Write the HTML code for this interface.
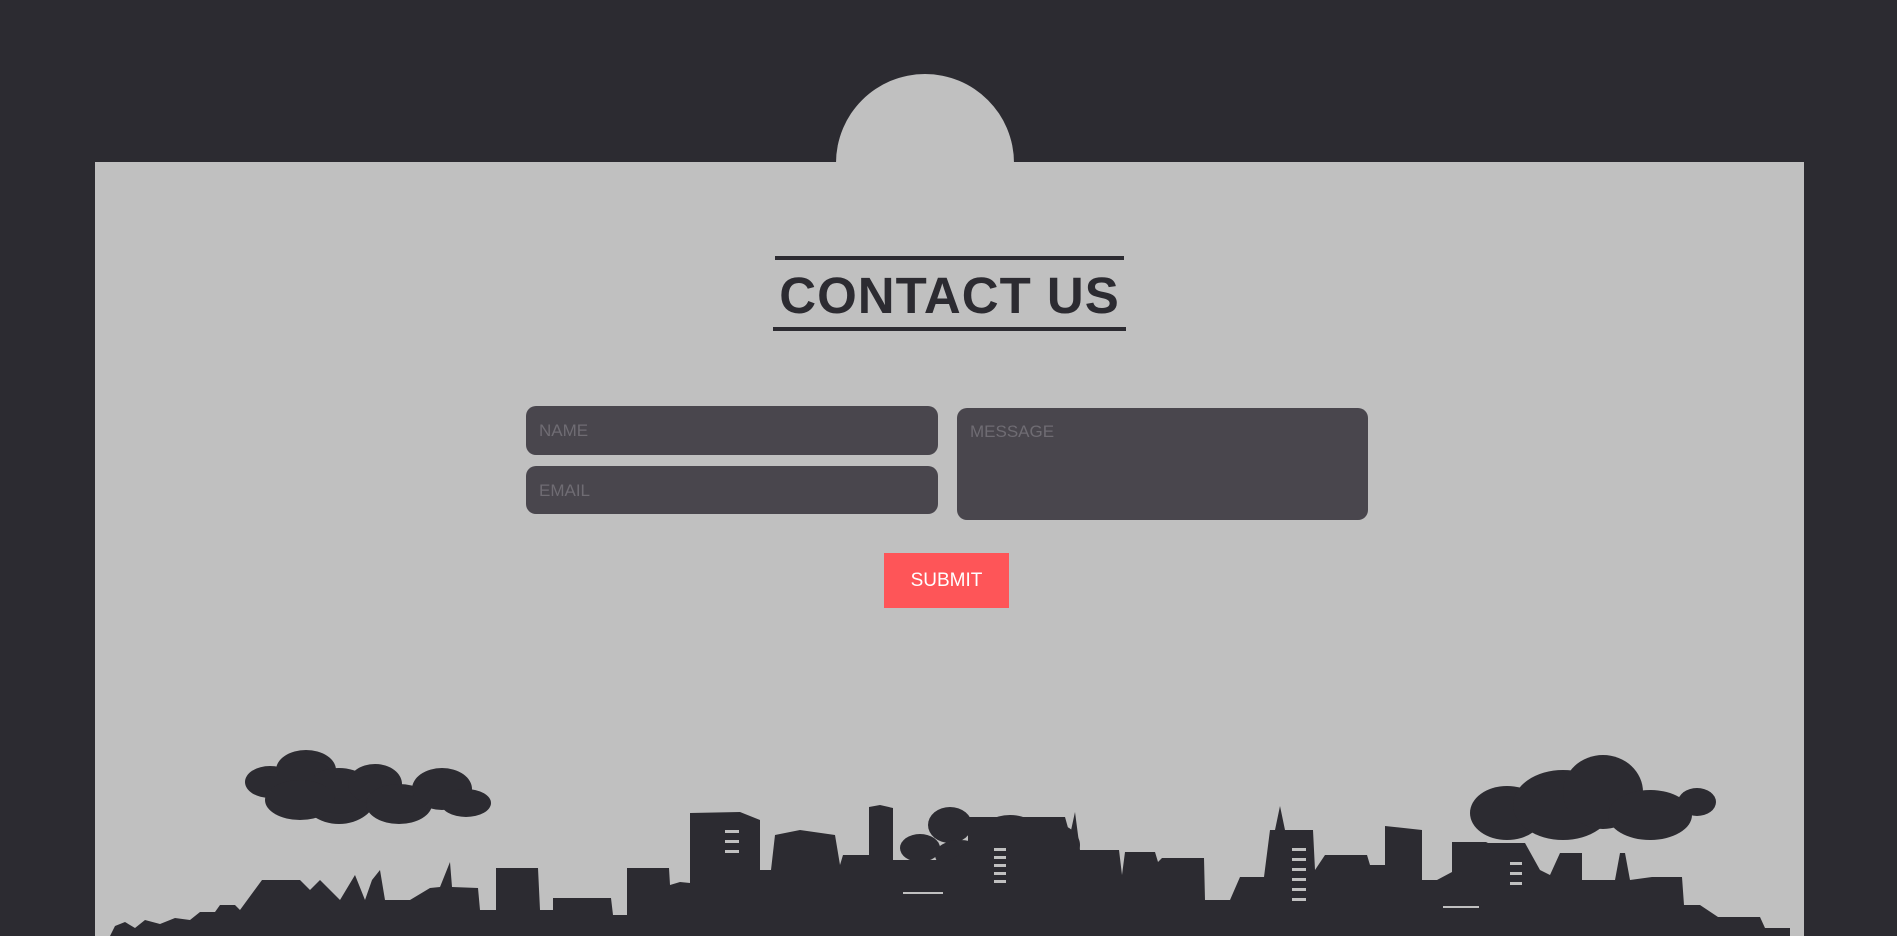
<!DOCTYPE html>
<html><head><meta charset="utf-8"><style>
html,body{margin:0;padding:0;width:1897px;height:936px;overflow:hidden;background:#2c2b31;font-family:"Liberation Sans",Arial,sans-serif;}
.panel{position:absolute;left:95px;top:162px;width:1709px;height:774px;background:#c0c0c0;overflow:hidden;}
.dome{position:absolute;left:836px;top:74px;width:178px;height:178px;border-radius:50%;background:#c0c0c0;}
.t1{position:absolute;left:775px;top:256px;width:349px;height:4px;background:#2c2b31;}
.t2{position:absolute;left:773px;top:327px;width:353px;height:4px;background:#2c2b31;}
.title{position:absolute;left:673px;top:266px;width:553px;text-align:center;white-space:nowrap;font-weight:bold;font-size:51px;line-height:60px;color:#2c2b31;letter-spacing:1px;}
.inp{position:absolute;background:#49464d;border-radius:10px;color:#6f6c73;font-size:17px;box-sizing:border-box;padding-left:13px;}
.btn{position:absolute;left:884px;top:553px;width:125px;height:55px;background:#fe5558;color:#fff;font-size:19px;text-align:center;line-height:55px;}
svg{position:absolute;left:0;top:0;}
</style></head><body>
<div class="dome"></div>
<div class="panel"></div>
<div class="t1"></div>
<div class="title">CONTACT US</div>
<div class="t2"></div>
<div class="inp" style="left:526px;top:406px;width:412px;height:49px;line-height:50px;">NAME</div>
<div class="inp" style="left:526px;top:466px;width:412px;height:48px;line-height:50px;">EMAIL</div>
<div class="inp" style="left:957px;top:408px;width:411px;height:112px;padding-top:14px;">MESSAGE</div>
<div class="btn">SUBMIT</div>
<svg width="1897" height="936" viewBox="0 0 1897 936">
<g fill="#2c2b31">
<ellipse cx="270" cy="782" rx="25" ry="16"/><ellipse cx="306" cy="770" rx="30" ry="20"/><ellipse cx="339" cy="796" rx="37" ry="28"/><ellipse cx="375" cy="784" rx="27" ry="20"/><ellipse cx="399" cy="804" rx="33" ry="20"/><ellipse cx="442" cy="789" rx="30" ry="21"/><ellipse cx="466" cy="803" rx="25" ry="14"/><ellipse cx="300" cy="800" rx="35" ry="20"/>
<ellipse cx="1507" cy="813" rx="37" ry="27"/><ellipse cx="1563" cy="805" rx="50" ry="35"/><ellipse cx="1603" cy="792" rx="40" ry="37"/><ellipse cx="1650" cy="815" rx="42" ry="25"/><ellipse cx="1697" cy="802" rx="19" ry="14"/>
<ellipse cx="950" cy="825" rx="22" ry="18"/><ellipse cx="920" cy="848" rx="20" ry="14"/><ellipse cx="960" cy="855" rx="25" ry="15"/><ellipse cx="1010" cy="835" rx="30" ry="20"/><ellipse cx="1050" cy="845" rx="30" ry="22"/>
<path d="M110 936 L115 926 L125 922 L135 928 L145 920 L160 924 L175 918 L190 920 L200 912 L215 912 L220 905 L235 905 L240 910 L262 880 L300 880 L310 890 L320 880 L340 900 L355 875 L365 900 L372 880 L380 870 L385 900 L410 900 L430 888 L440 887 L450 862 L452 887 L478 888 L480 910 L496 910 L496 868 L538 868 L540 910 L553 910 L553 898 L611 898 L613 915 L627 915 L627 868 L669 868 L670 885 L680 882 L690 883 L690 813 L740 812 L760 820 L760 870 L771 870 L775 835 L800 830 L835 835 L840 865 L843 855 L869 855 L869 807 L880 805 L893 808 L893 860 L950 860 L968 850 L968 817 L1065 817 L1070 835 L1075 812 L1078 835 L1080 850 L1119 850 L1122 875 L1125 852 L1155 852 L1158 862 L1162 858 L1204 858 L1205 900 L1230 900 L1240 877 L1264 877 L1270 830 L1275 830 L1280 806 L1285 830 L1313 830 L1315 870 L1325 855 L1367 855 L1370 865 L1385 865 L1385 826 L1422 830 L1422 880 L1437 880 L1452 872 L1452 842 L1486 842 L1488 843 L1525 843 L1540 870 L1550 875 L1560 853 L1582 853 L1582 880 L1615 880 L1620 853 L1625 853 L1630 880 L1652 877 L1682 877 L1684 905 L1700 905 L1718 917 L1760 917 L1765 928 L1790 928 L1790 936 Z"/>
</g>
<g fill="#c0c0c0">
<rect x="725" y="830" width="14" height="3"/><rect x="725" y="840" width="14" height="3"/><rect x="725" y="850" width="14" height="3"/>
<rect x="994" y="848" width="12" height="3"/><rect x="994" y="856" width="12" height="3"/><rect x="994" y="864" width="12" height="3"/><rect x="994" y="872" width="12" height="3"/><rect x="994" y="880" width="12" height="3"/>
<rect x="1292" y="848" width="14" height="3"/><rect x="1292" y="858" width="14" height="3"/><rect x="1292" y="868" width="14" height="3"/><rect x="1292" y="878" width="14" height="3"/><rect x="1292" y="888" width="14" height="3"/><rect x="1292" y="898" width="14" height="3"/>
<rect x="1510" y="862" width="12" height="3"/><rect x="1510" y="872" width="12" height="3"/><rect x="1510" y="882" width="12" height="3"/>
<rect x="903" y="892" width="40" height="2"/><rect x="1443" y="906" width="36" height="2"/>
</g>
</svg>
</body></html>
